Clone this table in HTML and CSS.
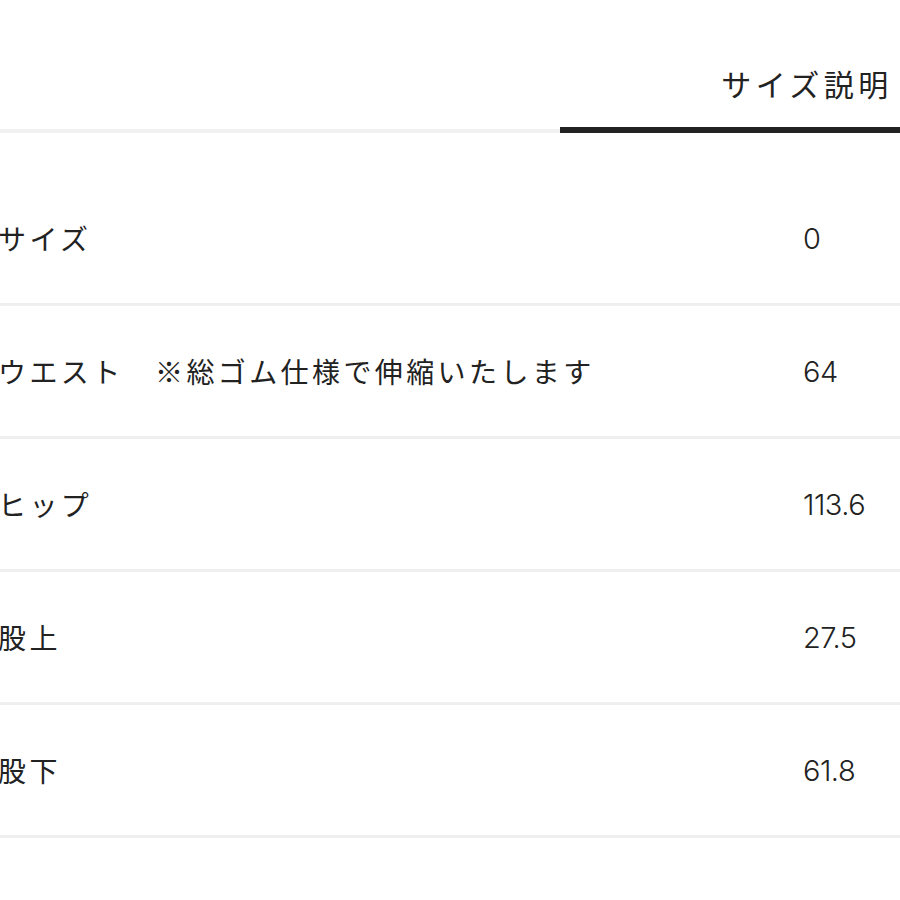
FILE: index.html
```html
<!DOCTYPE html>
<html lang="ja">
<head>
<meta charset="utf-8">
<link rel="stylesheet" href="styles.css">
</head>
<body>
<div class="tabs">
  <div class="tab">サイズ説明</div>
</div>
<div class="table">
  <div class="row"><div class="label">サイズ</div><div class="value">0</div></div>
  <div class="row"><div class="label">ウエスト　※総ゴム仕様で伸縮いたします</div><div class="value">64</div></div>
  <div class="row"><div class="label">ヒップ</div><div class="value">113.6</div></div>
  <div class="row"><div class="label">股上</div><div class="value">27.5</div></div>
  <div class="row"><div class="label">股下</div><div class="value">61.8</div></div>
</div>
</body>
</html>
```
FILE: styles.css
```css
html, body {
  margin: 0;
  padding: 0;
  overflow: hidden;
  background: #fff;
}
body {
  width: 900px;
  height: 900px;
  color: #222;
  font-family: "Noto Sans CJK JP", "Noto Sans", sans-serif;
}
.tabs {
  display: flex;
  height: 129px;
  border-bottom: 4px solid #f1f1f1;
}
.tab {
  flex: 0 0 490px;
  margin-left: 560px;
  margin-bottom: -4px;
  border-bottom: 6px solid #222;
  box-sizing: border-box;
  height: 133px;
  padding-top: 38px;
  padding-left: 4px;
  display: flex;
  align-items: center;
  justify-content: center;
  font-size: 30px;
  letter-spacing: 4.5px;
}
.table {
  margin-top: 40px;
}
.row {
  display: grid;
  grid-template-columns: 803px 1fr;
  align-items: center;
  height: 130px;
  border-bottom: 3px solid #efefef;
}
.label {
  margin-left: -2px;
  font-size: 28px;
  letter-spacing: 3.4px;
  white-space: nowrap;
}
.value {
  font-family: Inter, "Noto Sans", sans-serif;
  font-weight: 300;
  font-size: 29px;
  letter-spacing: -0.5px;
}
```
